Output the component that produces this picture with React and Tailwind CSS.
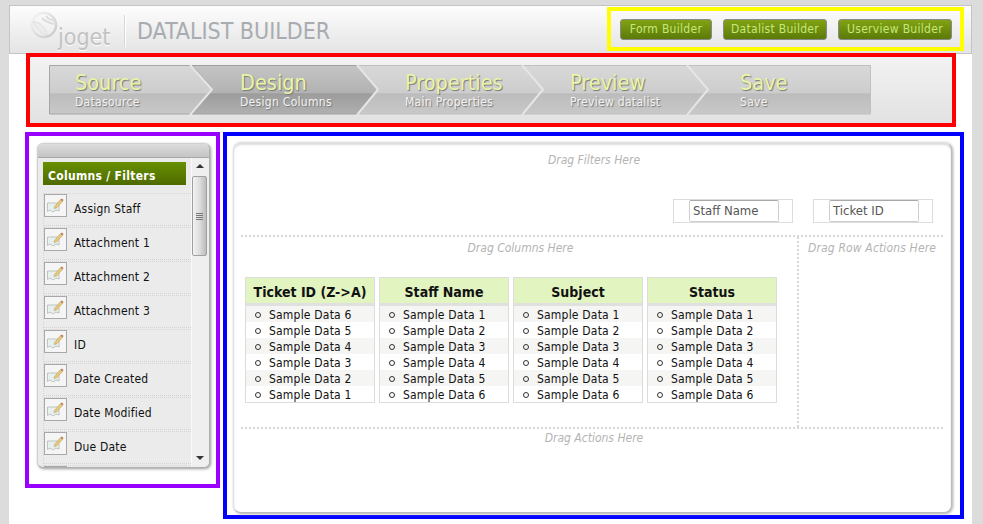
const font = { fontFamily: '"DejaVu Sans Condensed", "DejaVu Sans", Tahoma, sans-serif' };

const steps = [
  ["Source", "Datasource"],
  ["Design", "Design Columns"],
  ["Properties", "Main Properties"],
  ["Preview", "Preview datalist"],
  ["Save", "Save"],
];

const fields = ["Assign Staff", "Attachment 1", "Attachment 2", "Attachment 3", "ID", "Date Created", "Date Modified", "Due Date", ""];

const columns = [
  ["Ticket ID (Z->A)", [6, 5, 4, 3, 2, 1]],
  ["Staff Name", [1, 2, 3, 4, 5, 6]],
  ["Subject", [1, 2, 3, 4, 5, 6]],
  ["Status", [1, 2, 3, 4, 5, 6]],
];

const buttons = [
  ["Form Builder", "w-[92px]"],
  ["Datalist Builder", "w-[104px]"],
  ["Userview Builder", "w-[114px]"],
];

function Logo() {
  return (
    <svg width="28" height="28" viewBox="0 0 28 28" className="shrink-0">
      <defs>
        <linearGradient id="logoRing" x1="0" y1="0" x2="1" y2="1">
          <stop offset="0" stopColor="#f6f6f6" />
          <stop offset="1" stopColor="#c8c8c8" />
        </linearGradient>
      </defs>
      <circle cx="14" cy="14" r="12" fill="none" stroke="url(#logoRing)" strokeWidth="2.5" />
      <path d="M3 11 C9 10 15 15 18 25 C12 23 6 18 3 11 Z" fill="#ececec" stroke="#cfcfcf" strokeWidth="0.5" />
      <path d="M12 7 C15 10 19 12 24 13 M16 5 C18 8 21 9 25 10" stroke="#dcdcdc" strokeWidth="1.8" fill="none" />
    </svg>
  );
}

function StepShapes() {
  const light = "url(#stepLight)";
  const dark = "url(#stepDark)";
  const shape = (x, w) =>
    `M${x} .5 H${x + w} L${x + w + 21} 24.5 L${x + w} 49 H${x} L${x + 21} 24.5 Z`;
  return (
    <svg width="823" height="50" viewBox="0 0 823 50" className="absolute left-0 top-0">
      <defs>
        <linearGradient id="stepLight" x1="0" y1="0" x2="0" y2="1">
          <stop offset="0" stopColor="#d8d8d8" />
          <stop offset="0.57" stopColor="#cdcdcd" />
          <stop offset="0.58" stopColor="#bcbcbc" />
          <stop offset="1" stopColor="#c8c8c8" />
        </linearGradient>
        <linearGradient id="stepDark" x1="0" y1="0" x2="0" y2="1">
          <stop offset="0" stopColor="#c4c4c4" />
          <stop offset="0.57" stopColor="#b2b2b2" />
          <stop offset="0.58" stopColor="#9c9c9c" />
          <stop offset="1" stopColor="#b0b0b0" />
        </linearGradient>
      </defs>
      <path d="M.5 .5 H141 L163 24.5 L141 49 H.5 Z" fill={light} stroke="#a6a6a6" />
      <path d={shape(143, 165)} fill={dark} stroke="#a0a0a0" />
      <path d={shape(308, 165)} fill={light} stroke="#c0c0c0" />
      <path d={shape(473, 165)} fill={light} stroke="#c0c0c0" />
      <path d="M638 .5 H821.5 V49 H638 L659 24.5 Z" fill={light} stroke="#c0c0c0" />
      <path d="M141 0 L163 24.5 L141 50" fill="none" stroke="#e6e6e6" strokeWidth="2" />
      <path d="M308 0 L329 24.5 L308 50" fill="none" stroke="#e6e6e6" strokeWidth="2" />
      <path d="M473 0 L494 24.5 L473 50" fill="none" stroke="#e6e6e6" strokeWidth="2" />
      <path d="M638 0 L659 24.5 L638 50" fill="none" stroke="#e6e6e6" strokeWidth="2" />
    </svg>
  );
}

function FieldIcon() {
  return (
    <div className="w-[23px] h-[23px] shrink-0 border border-[#a8a8a8] bg-[#f5f5f5] flex items-center justify-center">
      <svg width="19" height="17" viewBox="0 0 19 17">
        <path d="M1.5 6 H13 V14 L10 13 L7 15 L4 13 L1.5 14.5 Z" fill="#e6f0ee" stroke="#c2c2c2" />
        <path d="M8.5 9.5 L14.5 2.5 L16.5 4.5 L10.5 11 L8 11.5 Z" fill="#e8c878" stroke="#b89a58" strokeWidth="0.5" />
        <path d="M14.5 2.5 L16.5 4.5 L17.5 3 L16 1.5 Z" fill="#b98060" />
      </svg>
    </div>
  );
}

function Scrollbar() {
  return (
    <div className="w-[18px] shrink-0 border-l border-[#fafafa] bg-[#efefef] flex flex-col items-start">
      <div className="w-[16px] h-[18px] pt-[6px] flex justify-center shrink-0">
        <div className="w-0 h-0 border-x-[4px] border-x-transparent border-b-[4px] border-b-[#333]" />
      </div>
      <div className="w-[15px] h-[80px] border border-[#a0a0a0] rounded-[2px] bg-gradient-to-r from-[#f2f2f2] via-[#dedede] to-[#bcbcbc] flex flex-col items-center justify-center gap-[1px]">
        <div className="w-[7px] h-px bg-[#777]" />
        <div className="w-[7px] h-px bg-[#777]" />
        <div className="w-[7px] h-px bg-[#777]" />
        <div className="w-[7px] h-px bg-[#777]" />
      </div>
      <div className="flex-1" />
      <div className="w-[16px] h-[15px] pt-[4px] flex justify-center shrink-0">
        <div className="w-0 h-0 border-x-[4px] border-x-transparent border-t-[4px] border-t-[#333]" />
      </div>
    </div>
  );
}

function DragLabel({ children, className = "" }) {
  return <div className={`text-[12px] italic text-[#b4b4b4] leading-[14px] ${className}`}>{children}</div>;
}

function FilterBox({ label }) {
  return (
    <div className="w-[120px] h-[24px] border border-[#dcdcdc] flex justify-start pl-[15px]">
      <div className="w-[90px] h-[22px] border border-[#cfcfcf] border-t-[#a8a8a8] rounded-[2px] pl-[3px] text-[13px] leading-[20px] text-[#555]">
        {label}
      </div>
    </div>
  );
}

export default function App() {
  return (
    <div style={font} className="w-[983px] h-[524px] bg-[#dcdcdc] overflow-hidden pt-[5px] pl-[9px]">
      <div className="w-[963px] h-[519px] bg-white">
        {/* header */}
        <div className="h-[49px] border border-[#c4c4c4] bg-gradient-to-b from-[#fdfdfd] to-[#e4e4e4] flex items-start justify-between pr-[7px] pt-[1px]">
          <div className="flex items-start pl-[20px] pt-[4px]">
            <Logo />
            <div className="text-[23px] leading-[24px] mt-[14px] text-[#c2c2c2] w-[66px] [text-shadow:0_1px_0_#fff]">joget</div>
            <div className="w-[2px] h-[32px] bg-[#d8d8d8] mt-[4px] border-r border-white" />
            <div className="ml-[11px] mt-[7px] text-[23px] leading-[26px] text-[#a8acb0] [text-shadow:1px_1px_0_#eee] whitespace-nowrap">DATALIST BUILDER</div>
          </div>
          <div className="border-[4px] border-[#ffff00] w-[357px] h-[44px] flex items-center gap-[11px] pl-[9px] pt-px text-[12px] tracking-[0.3px] text-[#c6e878]">
            {buttons.map(([b, w]) => (
              <div key={b} className={`${w} h-[21px] text-center leading-[19px] border border-[#8a8a8a] rounded-[3px] bg-gradient-to-b from-[#82a314] to-[#5b7a08] whitespace-nowrap`}>
                {b}
              </div>
            ))}
          </div>
        </div>

        {/* steps */}
        <div className="relative -mt-[1px] ml-[17px] w-[930px] h-[74px] border-[4px] border-[#ff0000] bg-gradient-to-b from-[#f2f2f2] to-[#e2e2e2] pl-[19px] pt-[8px]">
          <div className="relative w-[823px] h-[50px]">
            <StepShapes />
            <div className="relative flex pl-[26px]">
              {steps.map(([t, s], i) => (
                <div key={t} className={`w-[165px] shrink-0 ${i === 4 ? "pl-[5px]" : ""}`}>
                  <div className="text-[21.5px] leading-[25px] pt-[5px] text-[#e9f5a6] [text-shadow:1px_1px_1px_#777] whitespace-nowrap">{t}</div>
                  <div className="text-[12px] leading-[14px] tracking-[0.3px] text-[#f2f2f2] [text-shadow:1px_1px_1px_#777] whitespace-nowrap">{s}</div>
                </div>
              ))}
            </div>
          </div>
        </div>

        {/* body */}
        <div className="flex items-start gap-[3px] ml-[16px] mt-[5px]">
          <div className="w-[195px] h-[356px] border-[4px] border-[#9900ff] pl-[8px] pt-[7px]">
            <div className="w-[173px] h-[325px] rounded-[6px] overflow-hidden border border-[#d0d0d0] border-b-[#b0b0b0] border-r-[#b0b0b0] shadow-[1px_1px_3px_#999] bg-[#ebebeb] flex flex-col">
              <div className="h-[14px] shrink-0 bg-gradient-to-b from-[#dcdcdc] to-[#c4c4c4] border-b border-[#a8a8a8]" />
              <div className="flex flex-1 min-h-0">
                <div className="flex-1 min-w-0 overflow-hidden pl-[5px] pt-[4px]">
                  <div className="w-[143px] h-[23px] bg-gradient-to-b from-[#679000] to-[#4f6a00] text-white font-bold text-[12px] tracking-[0.3px] leading-[28px] pl-[5px] whitespace-nowrap">
                    Columns / Filters
                  </div>
                  <div className="pt-[8px]">
                    {fields.map((f, i) => (
                      <div key={i} className="h-[33px] mb-px flex items-start gap-[7px] border border-r-0 border-dotted border-[#d4d4d4] text-[12px] tracking-[0.2px] text-[#111]">
                        <FieldIcon />
                        <span className="leading-[30px] whitespace-nowrap">{f}</span>
                      </div>
                    ))}
                  </div>
                </div>
                <Scrollbar />
              </div>
            </div>
          </div>

          <div className="w-[741px] h-[387px] border-[4px] border-[#0000ff] pl-[6px] pt-[6px]">
            <div className="w-[719px] h-[371px] rounded-[8px] border border-[#e0e0e0] border-r-[#bbb] border-b-[#bbb] shadow-[1px_1px_3px_#aaa,inset_0_2px_2px_#ddd] bg-white pl-[7px] pr-[8px]">
              <div className="h-[94px] border-b-2 border-dotted border-[#d8d8d8] flex flex-col">
                <DragLabel className="text-center pt-[10px] pl-[4px]">Drag Filters Here</DragLabel>
                <div className="flex gap-[20px] pl-[432px] pt-[32px]">
                  <FilterBox label="Staff Name" />
                  <FilterBox label="Ticket ID" />
                </div>
              </div>
              <div className="h-[192px] border-b-2 border-dotted border-[#d8d8d8] flex">
                <div className="w-[558px] shrink-0 border-r-2 border-dotted border-[#d8d8d8] pl-[4px]">
                  <DragLabel className="text-center pt-[4px] pr-[1px]">Drag Columns Here</DragLabel>
                  <div className="flex items-start gap-[4px] pt-[22px]">
                    {columns.map(([h, rows]) => (
                      <div key={h} className="w-[130px] border border-[#dcdcdc] bg-white">
                        <div className="h-[25px] bg-[#e2f4bf] border-b-[3px] border-[#e0e0e0] box-content text-center font-bold text-[14px] leading-[28px] text-[#111] whitespace-nowrap">{h}</div>
                        {rows.map((n, i) => (
                          <div key={n} className={`h-[16px] flex items-center pl-[9px] pt-[2px] text-[12px] tracking-[0.2px] text-[#111] ${i % 2 ? "bg-white" : "bg-[#f5f5f3]"}`}>
                            <span className="w-[6px] h-[6px] rounded-full border border-[#333] mr-[8px] shrink-0" />
                            <span className="whitespace-nowrap">Sample Data {n}</span>
                          </div>
                        ))}
                      </div>
                    ))}
                  </div>
                </div>
                <DragLabel className="pl-[9px] pt-[4px] tracking-[0.15px] whitespace-nowrap">Drag Row Actions Here</DragLabel>
              </div>
              <DragLabel className="text-center pt-[2px] pl-[4px]">Drag Actions Here</DragLabel>
            </div>
          </div>
        </div>
      </div>
    </div>
  );
}
